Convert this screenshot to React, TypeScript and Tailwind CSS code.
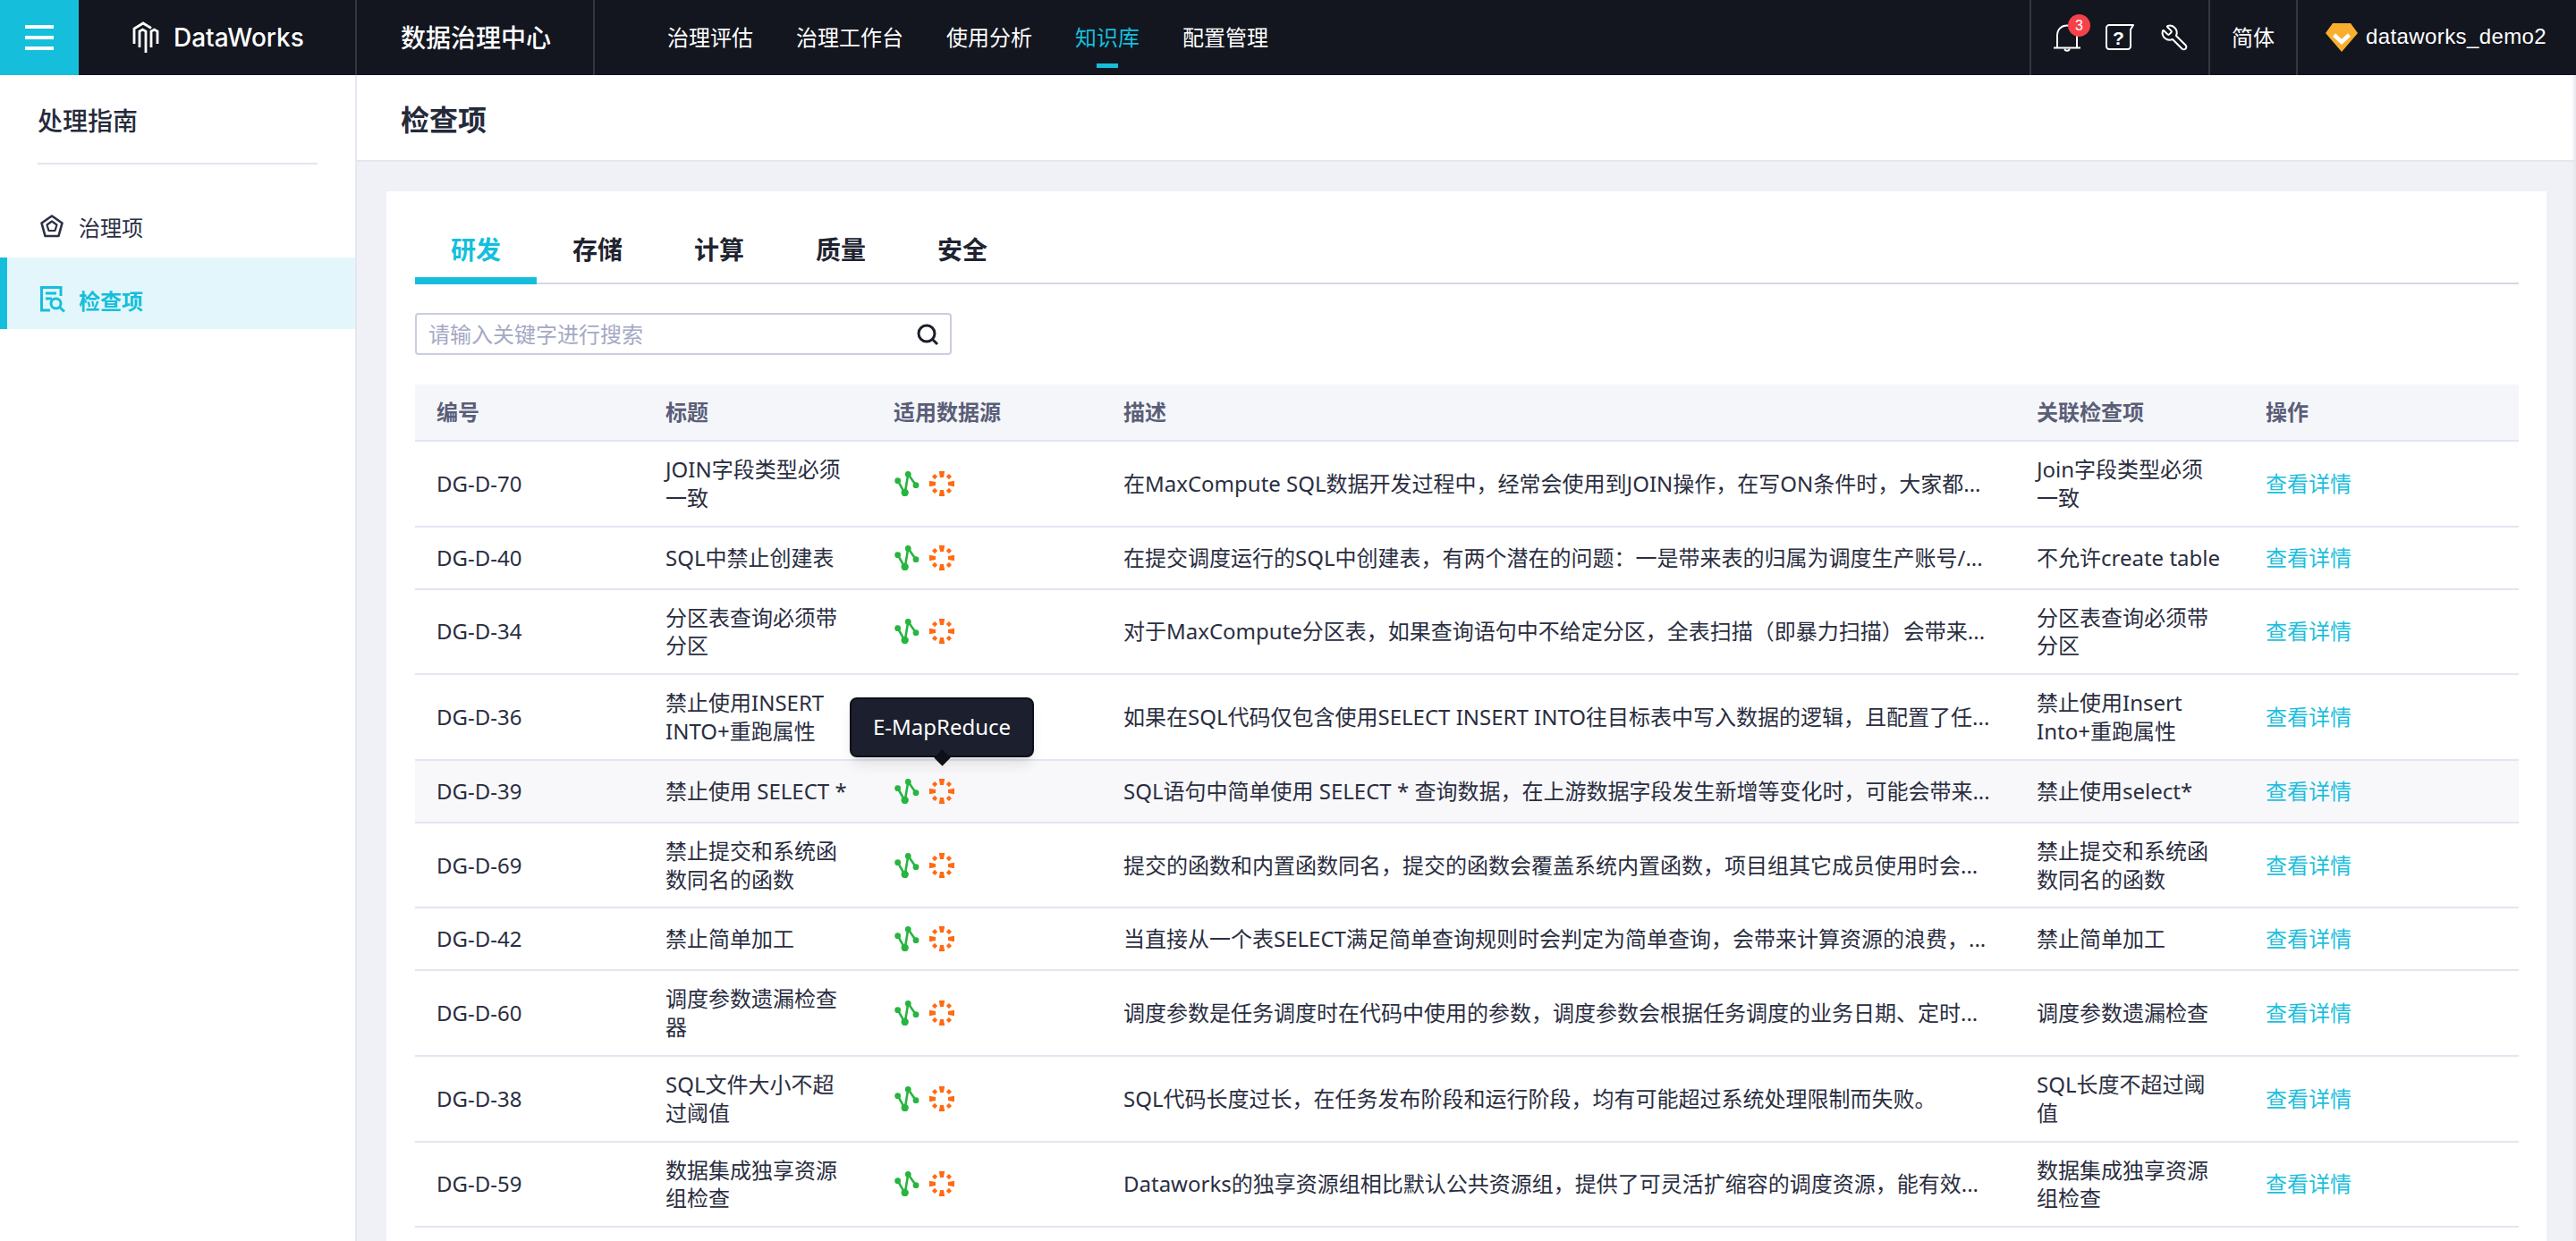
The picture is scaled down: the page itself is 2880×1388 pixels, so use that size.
import { Wrench } from 'lucide-react';

const NAV = ['治理评估', '治理工作台', '使用分析', '知识库', '配置管理'];
const TABS = ['研发', '存储', '计算', '质量', '安全'];
const COLS = 'grid grid-cols-[256px_255px_256px_1022px_256px_307px] items-center';

const ROWS = [
    { id: 'DG-D-70', title: 'JOIN字段类型必须一致', desc: '在MaxCompute SQL数据开发过程中，经常会使用到JOIN操作，在写ON条件时，大家都...', link: 'Join字段类型必须一致' },
    { id: 'DG-D-40', title: 'SQL中禁止创建表', desc: '在提交调度运行的SQL中创建表，有两个潜在的问题：一是带来表的归属为调度生产账号/...', link: '不允许create table' },
    { id: 'DG-D-34', title: '分区表查询必须带分区', desc: '对于MaxCompute分区表，如果查询语句中不给定分区，全表扫描（即暴力扫描）会带来...', link: '分区表查询必须带分区' },
    { id: 'DG-D-36', title: '禁止使用INSERT INTO+重跑属性', desc: '如果在SQL代码仅包含使用SELECT INSERT INTO往目标表中写入数据的逻辑，且配置了任...', link: '禁止使用Insert Into+重跑属性' },
    { id: 'DG-D-39', title: '禁止使用 SELECT *', desc: 'SQL语句中简单使用 SELECT * 查询数据，在上游数据字段发生新增等变化时，可能会带来...', link: '禁止使用select*', hover: true },
    { id: 'DG-D-69', title: '禁止提交和系统函数同名的函数', desc: '提交的函数和内置函数同名，提交的函数会覆盖系统内置函数，项目组其它成员使用时会...', link: '禁止提交和系统函数同名的函数' },
    { id: 'DG-D-42', title: '禁止简单加工', desc: '当直接从一个表SELECT满足简单查询规则时会判定为简单查询，会带来计算资源的浪费，...', link: '禁止简单加工' },
    { id: 'DG-D-60', title: '调度参数遗漏检查器', desc: '调度参数是任务调度时在代码中使用的参数，调度参数会根据任务调度的业务日期、定时...', link: '调度参数遗漏检查' },
    { id: 'DG-D-38', title: 'SQL文件大小不超过阈值', desc: 'SQL代码长度过长，在任务发布阶段和运行阶段，均有可能超过系统处理限制而失败。', link: 'SQL长度不超过阈值' },
    { id: 'DG-D-59', title: '数据集成独享资源组检查', desc: 'Dataworks的独享资源组相比默认公共资源组，提供了可灵活扩缩容的调度资源，能有效...', link: '数据集成独享资源组检查' },
];

function Logo() {
    return (
        <svg width="30" height="38" viewBox="0 0 30 38" fill="none" stroke="white" strokeWidth="2.800">
            <path d="M2 26V9L12 3L17 6" />
            <path d="M8 30V12L11.5 10L15 12V36" />
            <path d="M21 30V12L24.5 10L28 12V26" />
            <path d="M17 6L21 8.5" />
        </svg>
    );
}

function BellIcon() {
    return (
        <svg width="30" height="32" viewBox="0 0 30 32" fill="none" stroke="white" strokeWidth="2">
            <path d="M4 27V14C4 7 8.500 2.500 15 2.500C21.500 2.500 26 7 26 14V27" />
            <path d="M0 27.500H30" />
            <path d="M12.500 28.500C12.500 31.500 17.500 31.500 17.500 28.500" />
        </svg>
    );
}

function HelpIcon() {
    return (
        <svg width="32" height="30" viewBox="0 0 32 30" fill="none">
            <path d="M31 1H4C2.500 1 1 2.500 1 4V25C1 26.500 2.500 28 4 28H25C26.500 28 28 26.500 28 25V6Z" stroke="white" strokeWidth="2" strokeLinejoin="round" />
            <text x="14.500" y="23" fill="white" fontSize="21" fontWeight="700" textAnchor="middle" fontFamily="Liberation Sans, sans-serif">?</text>
        </svg>
    );
}

function GemIcon() {
    return (
        <svg width="36" height="32" viewBox="0 0 36 32" fill="none">
            <path d="M8 0H28L36 11L18 32L0 11Z" fill="#f9ae2e" />
            <path d="M9.500 13L18 21L26.500 13" stroke="white" strokeWidth="4.500" />
        </svg>
    );
}

function PentagonIcon() {
    return (
        <svg width="26" height="26" viewBox="0 0 26 26" fill="none" stroke="#2b3044" strokeLinejoin="round">
            <path d="M13 1.500L24.500 9.500L20.500 24H5.500L1.500 9.500Z" strokeWidth="2.600" />
            <path d="M13 7.500L18.500 11.500L16.500 18H9.500L7.500 11.500Z" strokeWidth="2.200" />
        </svg>
    );
}

function CheckDocIcon() {
    return (
        <svg width="28" height="30" viewBox="0 0 28 30" fill="none" stroke="#15bfdc">
            <path d="M11 27H1.500V1.500H23V11" strokeWidth="3" />
            <path d="M6 8H18M6 14H13" strokeWidth="3" />
            <circle cx="17.500" cy="19.500" r="5.500" strokeWidth="3" />
            <path d="M21.500 23.500L27 28.500" strokeWidth="3" />
        </svg>
    );
}

function SearchIcon() {
    return (
        <svg width="26" height="26" viewBox="0 0 26 26" fill="none" stroke="#1b1f2c" strokeWidth="3">
            <circle cx="12" cy="12" r="9" />
            <path d="M18.500 18.500L24 24" />
        </svg>
    );
}

function GreenNodes() {
    return (
        <svg width="28" height="28" viewBox="0 0 28 28" fill="#27b53f" stroke="none">
            <path d="M3.700 10.700L11.700 24.700L15.300 3.300L24 15.700" fill="none" stroke="#27b53f" strokeWidth="2.600" />
            <circle cx="3.700" cy="10.700" r="3.400" />
            <circle cx="15.300" cy="3.500" r="3.400" />
            <circle cx="24" cy="15.700" r="3.400" />
            <circle cx="11.700" cy="24" r="4.200" />
        </svg>
    );
}

function OrangeBurst() {
    return (
        <svg width="28" height="28" viewBox="0 0 28 28" fill="#ff6a13">
            {[0, 90, 180, 270].map((deg) => (
                <path key={deg} d="M10.800 0H17.200L16 7H12Z" transform={`rotate(${deg} 14 14)`} />
            ))}
            {[45, 135, 225, 315].map((deg) => (
                <rect key={deg} x="11.800" y="0.600" width="4.400" height="4.400" transform={`rotate(${deg} 14 14)`} />
            ))}
        </svg>
    );
}

function Header() {
    return (
        <header className="flex h-[84px] items-stretch bg-[#13161f] text-white">
            <div className="flex w-[88px] flex-col items-center justify-center gap-2 bg-[#15bfdc]">
                <span className="h-1 w-8 bg-white" />
                <span className="h-1 w-8 bg-white" />
                <span className="h-1 w-8 bg-white" />
            </div>
            <div className="flex w-[311px] items-center gap-4 border-r-2 border-[#34373f] pl-[60px]">
                <Logo />
                <span className="font-['Inter',sans-serif] text-[28px] font-medium">DataWorks</span>
            </div>
            <div className="flex w-[266px] items-center border-r-2 border-[#34373f] pl-[49px] text-[28px] font-medium">
                数据治理中心
            </div>
            <nav className="flex items-center gap-12 pl-[81px] text-2xl">
                {NAV.map((item) => (
                    <span key={item} className={item === '知识库' ? 'relative text-[#15bfdc]' : ''}>
                        {item}
                        {item === '知识库' && (
                            <span className="absolute bottom-[-18px] left-6 h-[5px] w-6 bg-[#15bfdc]" />
                        )}
                    </span>
                ))}
            </nav>
            <div className="ml-auto flex">
                <div className="flex w-[200px] items-center border-l-2 border-[#34373f] pl-[25px]">
                    <div className="relative">
                        <BellIcon />
                        <span className="absolute right-[-11px] top-[-10px] flex h-[25px] w-[25px] items-center justify-center rounded-full bg-[#f5424a] font-['Liberation_Sans',sans-serif] text-base">
                            3
                        </span>
                    </div>
                    <div className="ml-[28px]">
                        <HelpIcon />
                    </div>
                    <Wrench className="ml-[29px] h-[32px] w-[32px] -scale-x-100" strokeWidth={1.5} />
                </div>
                <div className="flex w-[98px] items-center border-l-2 border-[#34373f] pl-[24px] text-2xl">简体</div>
                <div className="flex w-[313px] items-center gap-[9px] border-l-2 border-[#34373f] pl-[31px]">
                    <GemIcon />
                    <span className="pb-[2px] font-['Liberation_Sans',sans-serif] text-2xl tracking-[0.4px]">dataworks_demo2</span>
                </div>
            </div>
        </header>
    );
}

function Sidebar() {
    return (
        <aside className="w-[399px] shrink-0 border-r-2 border-[#e6e7f1] bg-white">
            <div className="mx-[42px] flex h-[100px] items-center border-b-2 border-[#e3e4ef] pt-1 text-[28px] font-medium text-[#252a3a]">
                处理指南
            </div>
            <div className="mt-[32px] flex h-[72px] items-center gap-[17px] pl-[45px] pt-[2px] text-2xl text-[#2b3044]">
                <PentagonIcon />
                <span className="pt-[4px]">治理项</span>
            </div>
            <div className="flex h-[80px] items-center gap-[15px] border-l-8 border-[#15bfdc] bg-[#e3f6fb] pl-[37px] pt-[13px] text-2xl font-semibold text-[#15bfdc]">
                <CheckDocIcon />
                <span className="pt-[4px]">检查项</span>
            </div>
        </aside>
    );
}

function Row({ row }: { row: (typeof ROWS)[number] }) {
    return (
        <div
            className={`${COLS} relative min-h-[70px] border-b-2 border-[#e3e5f2] py-[15px] text-2xl leading-[31.8px] text-[#2a2e3f] ${row.hover ? 'bg-[#f8f8fb]' : ''}`}
        >
            <div className="px-6">{row.id}</div>
            <div className="px-6">{row.title}</div>
            <div className="flex items-center gap-[11px] pl-[25px]">
                <GreenNodes />
                <OrangeBurst />
            </div>
            <div className="whitespace-nowrap pl-[25px]">{row.desc}</div>
            <div className="px-6">{row.link}</div>
            <div className="px-6 text-[#1ebfdd]">查看详情</div>
            {row.hover && (
                <div className="absolute left-[486px] top-[-71px] z-10 flex h-[67px] w-[206px] items-center justify-center rounded-lg border-2 border-[#0e1018] bg-[#1c1f2e] text-white shadow-lg">
                    E-MapReduce
                    <span className="absolute bottom-[-9px] left-[95px] h-[13px] w-[13px] rotate-45 bg-[#0e1018]" />
                </div>
            )}
        </div>
    );
}

export default function App() {
    return (
        <div className="flex h-[1388px] flex-col overflow-hidden bg-[#f0f1f7] font-['Noto_Sans','Noto_Sans_CJK_SC',sans-serif]">
            <Header />
            <div className="flex min-h-0 flex-1">
                <Sidebar />
                <main className="relative min-w-0 flex-1">
                    <div className="flex h-[97px] items-center border-b-2 border-[#e3e5f0] bg-white pl-[49px] pt-1 text-[32px] font-bold text-[#252a3a]">
                        检查项
                    </div>
                    <section className="mx-[33px] mt-[33px] h-full bg-white pl-8 pr-[31px] pt-8">
                        <div className="flex h-[72px] border-b-2 border-[#d5d7e6]">
                            {TABS.map((tab, i) => (
                                <div
                                    key={tab}
                                    className={`-mb-[2px] h-[72px] w-[136px] border-b-8 pt-3 text-center text-[28px] leading-[42px] font-bold ${i === 0 ? 'border-[#15bfdc] text-[#15bfdc]' : 'border-transparent text-[#1f2430]'}`}
                                >
                                    {tab}
                                </div>
                            ))}
                        </div>
                        <div className="mt-8 flex h-[47px] w-[600px] items-center justify-between rounded border-2 border-[#c9cde0] pl-[13px] pr-[12px] text-2xl text-[#a5a9c4]">
                            请输入关键字进行搜索
                            <SearchIcon />
                        </div>
                        <div
                            className={`${COLS} mt-[33px] h-[64px] border-b-2 border-[#e3e5f2] bg-[#f5f6fa] text-2xl font-semibold text-[#5a5e78]`}
                        >
                            <div className="pl-6">编号</div>
                            <div className="pl-6">标题</div>
                            <div className="pl-6">适用数据源</div>
                            <div className="pl-[25px]">描述</div>
                            <div className="pl-6">关联检查项</div>
                            <div className="pl-6">操作</div>
                        </div>
                        {ROWS.map((row) => (
                            <Row key={row.id} row={row} />
                        ))}
                    </section>
                    <div className="absolute bottom-0 right-0 top-0 w-[5px] bg-gradient-to-r from-transparent to-[#e6e7ee]" />
                </main>
            </div>
        </div>
    );
}
